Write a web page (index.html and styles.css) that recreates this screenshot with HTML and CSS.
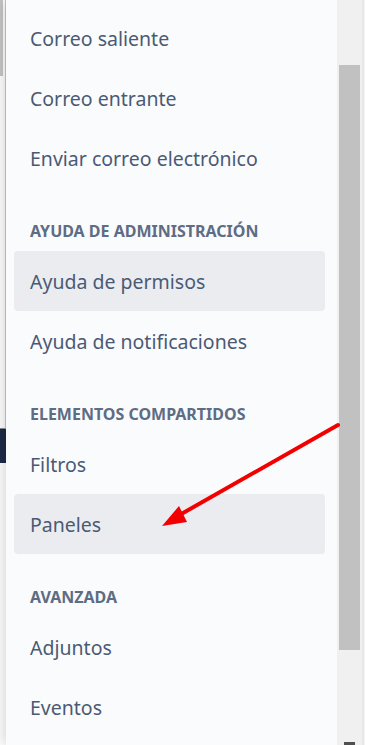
FILE: index.html
```html
<!DOCTYPE html>
<html lang="es">
<head>
<meta charset="utf-8">
<link rel="stylesheet" href="styles.css">
</head>
<body>
<div class="page">
  <div class="backdrop">
    <div class="bd-top"><div class="bd-scroll"></div></div>
    <div class="bd-dark"></div>
    <div class="bd-rest"></div>
  </div>
  <nav class="panel">
    <div class="item">Correo saliente</div>
    <div class="item">Correo entrante</div>
    <div class="item">Enviar correo electrónico</div>
    <div class="header">AYUDA DE ADMINISTRACIÓN</div>
    <div class="item active">Ayuda de permisos</div>
    <div class="item">Ayuda de notificaciones</div>
    <div class="header">ELEMENTOS COMPARTIDOS</div>
    <div class="item">Filtros</div>
    <div class="item active">Paneles</div>
    <div class="header">AVANZADA</div>
    <div class="item">Adjuntos</div>
    <div class="item">Eventos</div>
  </nav>
  <div class="scrollbar">
    <div class="thumb"></div>
    <div class="arrow-down"></div>
  </div>
  <div class="edge"></div>
  <div class="blank"></div>
  <svg class="annot" width="387" height="745" viewBox="0 0 387 745">
    <line x1="338" y1="425" x2="176" y2="517" stroke="#f20000" stroke-width="4" stroke-linecap="round"/>
    <polygon points="162,526 179,506 187,522" fill="#f20000"/>
  </svg>
</div>
</body>
</html>
```

FILE: styles.css
```css
html, body {
  margin: 0;
  padding: 0;
  background: #ffffff;
}
.page {
  position: relative;
  display: flex;
  width: 387px;
  height: 745px;
  overflow: hidden;
}
.backdrop {
  width: 6px;
  display: flex;
  flex-direction: column;
  background: #ffffff;
}
.bd-top {
  height: 429px;
  border-right: 1px solid #c9c9c9;
  border-bottom: 1px solid #8a8a8a;
  box-sizing: border-box;
}
.bd-scroll {
  width: 3px;
  height: 76px;
  background: #c6c6c6;
}
.bd-dark {
  height: 34px;
  background: #1c2b48;
}
.bd-rest {
  flex: 1;
  background: #ffffff;
}
.panel {
  width: 331px;
  height: 745px;
  padding-top: 8px;
  box-sizing: border-box;
  background: #fafbfc;
  box-shadow: -3px 0 12px rgba(0, 0, 0, 0.16);
  font-family: "Noto Sans", "Open Sans", sans-serif;
  color: #4a5a75;
  display: flex;
  flex-direction: column;
}
.item {
  height: 60px;
  flex: none;
  display: flex;
  align-items: center;
  margin: 0 12px 0 8px;
  padding-left: 16px;
  border-radius: 4px;
  font-size: 19.5px;
  white-space: nowrap;
}
.item.active {
  background: #ebecf0;
}
.header {
  height: 63px;
  flex: none;
  box-sizing: border-box;
  padding: 32px 0 0 24px;
  font-size: 16px;
  font-weight: 700;
  color: #5e6c84;
  white-space: nowrap;
}
.scrollbar {
  width: 25px;
  height: 745px;
  background: #f0f0f0;
  display: flex;
  flex-direction: column;
  align-items: center;
}
.thumb {
  margin-top: 65px;
  width: 21px;
  height: 585px;
  background: #c1c1c1;
}
.arrow-down {
  margin-top: auto;
  width: 11px;
  height: 3px;
  background: #505050;
}
.edge {
  width: 3px;
  height: 745px;
  background: #e8e8e8;
  border-right: 1px solid #f4f4f4;
  box-sizing: border-box;
}
.blank {
  flex: 1;
  background: #ffffff;
}
.annot {
  position: absolute;
  left: 0;
  top: 0;
  pointer-events: none;
}
```
